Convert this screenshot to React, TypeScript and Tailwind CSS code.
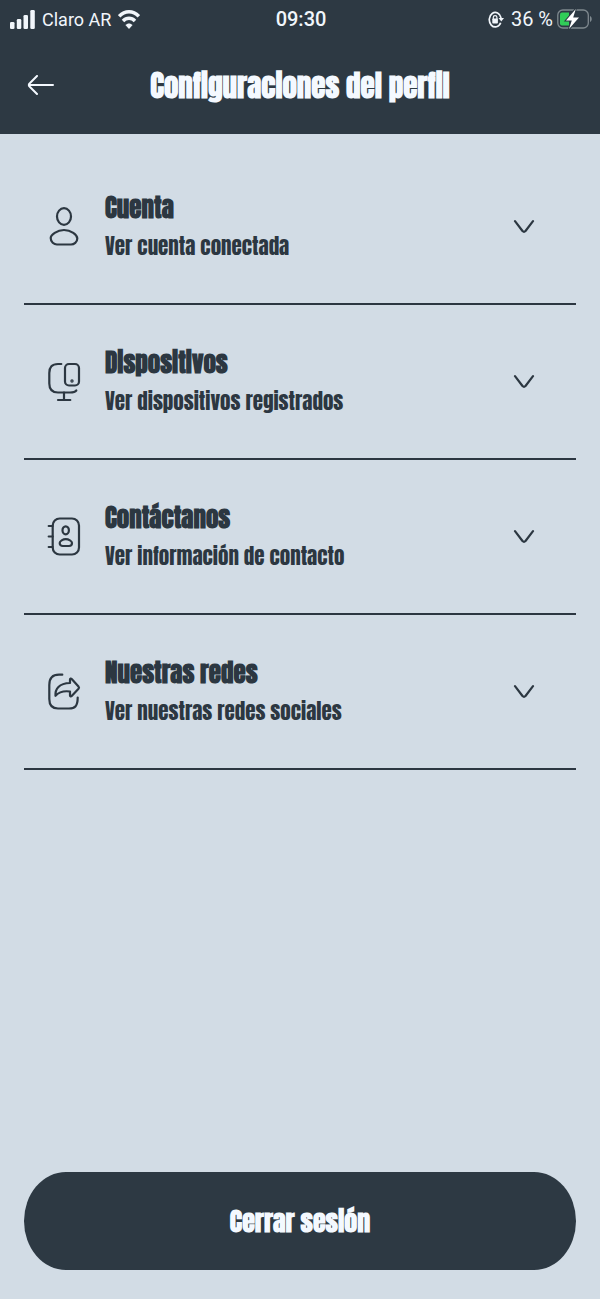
import { useState } from 'react'
import type { ReactNode } from 'react'

interface Section {
  id: string
  title: string
  subtitle: string
  icon: ReactNode
}

const sections: Section[] = [
  {
    id: 'cuenta',
    title: 'Cuenta',
    subtitle: 'Ver cuenta conectada',
    icon: (
      <>
        <ellipse cx="18" cy="9.5" rx="7" ry="8.3" />
        <path d="M4.7 31C4.7 28 11 23 18 23S31.3 28 31.3 31.5C31.3 35 28 37.5 25 37.5H11C8 37.5 4.7 35 4.7 31Z" />
      </>
    ),
  },
  {
    id: 'dispositivos',
    title: 'Dispositivos',
    subtitle: 'Ver dispositivos registrados',
    icon: (
      <>
        <path d="M15.3 2H12C6 2 3.3 5 3.3 11V21.5C3.3 27.5 6 30.5 12 30.5H24C27 30.5 29 30.3 30.3 28.5" />
        <rect x="19" y="2" width="14" height="21.5" rx="4" />
        <path d="M18 30.5V38M12 38H24.3" />
        <circle cx="26" cy="19" r=".6" fill="currentColor" />
      </>
    ),
  },
  {
    id: 'contactanos',
    title: 'Contáctanos',
    subtitle: 'Ver información de contacto',
    icon: (
      <>
        <rect x="6.7" y="1.5" width="26.3" height="36" rx="7" />
        <path d="M2.7 9H6.7M2.7 19.5H6.7M2.7 30H6.7" />
        <ellipse cx="19.7" cy="13.3" rx="3.2" ry="4" />
        <path d="M13.7 26C13.7 24 17 22.2 19.8 22.2S26 24 26 26C26 28 24.5 29 23 29H16.7C15 29 13.7 28 13.7 26Z" />
      </>
    ),
  },
  {
    id: 'redes',
    title: 'Nuestras redes',
    subtitle: 'Ver nuestras redes sociales',
    icon: (
      <>
        <path d="M16.3 2.7H13C6.5 2.7 3.3 6 3.3 13V27C3.3 33.5 6 36.5 12 36.5H23C29 36.5 31.7 34 31.7 25.5" />
        <path d="M24 11V7.5C24 6.5 25 6.3 25.7 7L32.5 14.5C33.2 15.3 33.2 16 32.5 16.8L25.7 24C25 24.7 24 24.4 24 23.5V19.5C17 18.5 13 20 9.5 23.8C9 17 13 11.3 24 11Z" />
      </>
    ),
  },
]

function StatusBar() {
  return (
    <div className="grid h-[38px] grid-cols-3 items-center pr-2 pl-[10px] font-[Roboto,sans-serif] text-[20px] text-[#f1f6fb]">
      <div className="flex items-center gap-[7px]">
        <svg className="h-[19px] w-[25px]" viewBox="0 0 25 19" fill="currentColor" aria-hidden="true">
          <rect x="0" y="12" width="4.5" height="7" rx="1.3" />
          <rect x="6.8" y="9" width="4.5" height="10" rx="1.3" />
          <rect x="13.5" y="5" width="4.5" height="14" rx="1.3" />
          <rect x="20.3" y="0" width="4.5" height="19" rx="1.3" />
        </svg>
        <span className="text-[18px] whitespace-nowrap">Claro AR</span>
        <svg className="h-[19px] w-[22px]" viewBox="0 0 22 19" fill="none" stroke="currentColor" strokeWidth="3.4" aria-hidden="true">
          <path d="M1.2 6.3C7 .2 15 .2 20.8 6.3" />
          <path d="M5 11C8.5 7.3 13.5 7.3 17 11" />
          <path d="M11 19L7.4 15C9.5 12.9 12.5 12.9 14.6 15Z" fill="currentColor" stroke="none" />
        </svg>
      </div>
      <div className="text-center font-medium">09:30</div>
      <div className="flex items-center justify-end gap-1">
        <svg className="mr-[3px] h-[17px] w-4" viewBox="0 0 16 17" fill="none" stroke="currentColor" strokeWidth="1.7" aria-hidden="true">
          <path d="M12.7 11.8A6 7.2 0 1 1 13.1 7" />
          <path d="M10.5 7H16L13.3 10.6Z" fill="currentColor" stroke="none" />
          <path d="M5.3 8V6.3C5.3 4 8.9 4 8.9 6.3V8" strokeWidth="1.2" />
          <rect x="4.3" y="7.5" width="5.6" height="5" rx=".8" fill="currentColor" stroke="none" />
        </svg>
        <span className="whitespace-nowrap">36 %</span>
        <svg className="h-[22px] w-[35px]" viewBox="0 0 35 22" aria-hidden="true">
          <rect x=".8" y="2" width="30.5" height="18" rx="5" fill="none" stroke="#7f898f" strokeWidth="1.3" />
          <path d="M33 8C35.3 9 35.3 13 33 14Z" fill="#7f898f" />
          <path d="M5 4.5H12V17.5H5Q3 17.5 3 15.5V6.5Q3 4.5 5 4.5Z" fill="#31cd58" />
          <path d="M18.8 1L9 12.5H14.8L12 21L22 9.5H16.2Z" fill="#fff" stroke="#2d3943" strokeWidth="2" paintOrder="stroke" />
        </svg>
      </div>
    </div>
  )
}

export default function App() {
  const [selected, setSelected] = useState<string | null>(null)

  return (
    <div className="flex min-h-screen flex-col bg-[#d2dce5] font-['Anton','Impact','Roboto_Condensed','Liberation_Sans_Narrow',sans-serif] text-[#2c3741]">
      <header className="bg-[#2d3943] text-[#f4f9ff]">
        <StatusBar />
        <div className="grid h-24 grid-cols-[80px_1fr_80px] items-center">
          <button type="button" aria-label="Volver" className="flex h-12 items-center justify-center">
            <svg className="h-[22px] w-7" viewBox="0 0 28 22" fill="none" stroke="currentColor" strokeWidth="2" strokeLinecap="round" strokeLinejoin="round" aria-hidden="true">
              <path d="M11 1L4 8Q1.6 10 4 12L11 19M3 10H27" />
            </svg>
          </button>
          <h1 className="text-center text-[29px] leading-10 font-bold whitespace-nowrap">Configuraciones del perfil</h1>
        </div>
      </header>

      <main className="flex flex-1 flex-col px-6 pt-4 pb-[29px]">
        <ul>
          {sections.map((section) => (
            <li key={section.id} className="border-b-2 border-[#2c3741]">
              <button
                type="button"
                aria-pressed={selected === section.id}
                onClick={() => setSelected(selected === section.id ? null : section.id)}
                className="flex h-[153px] w-full items-center pr-[41px] pl-[22px] text-left"
              >
                <svg className="h-10 w-9 shrink-0" viewBox="0 0 36 40" fill="none" stroke="currentColor" strokeWidth="2.2" strokeLinecap="round" strokeLinejoin="round" aria-hidden="true">
                  {section.icon}
                </svg>
                <span className="ml-[23px] flex flex-1 flex-col">
                  <span className="text-[25px] leading-[38px] font-bold">{section.title}</span>
                  <span className="text-[21px] leading-[38px]">{section.subtitle}</span>
                </span>
                <svg className="h-[14px] w-[22px] shrink-0" viewBox="0 0 22 14" fill="none" stroke="currentColor" strokeWidth="2.2" strokeLinecap="round" strokeLinejoin="round" aria-hidden="true">
                  <path d="M2 1.2L9.5 11Q11 12.5 12.5 11L20 1.2" />
                </svg>
              </button>
            </li>
          ))}
        </ul>
        <button type="button" className="mt-auto h-[98px] w-full rounded-[42px/49px] bg-[#2d3943] text-[26px] font-bold text-[#f4f9ff]">
          Cerrar sesión
        </button>
      </main>
    </div>
  )
}
